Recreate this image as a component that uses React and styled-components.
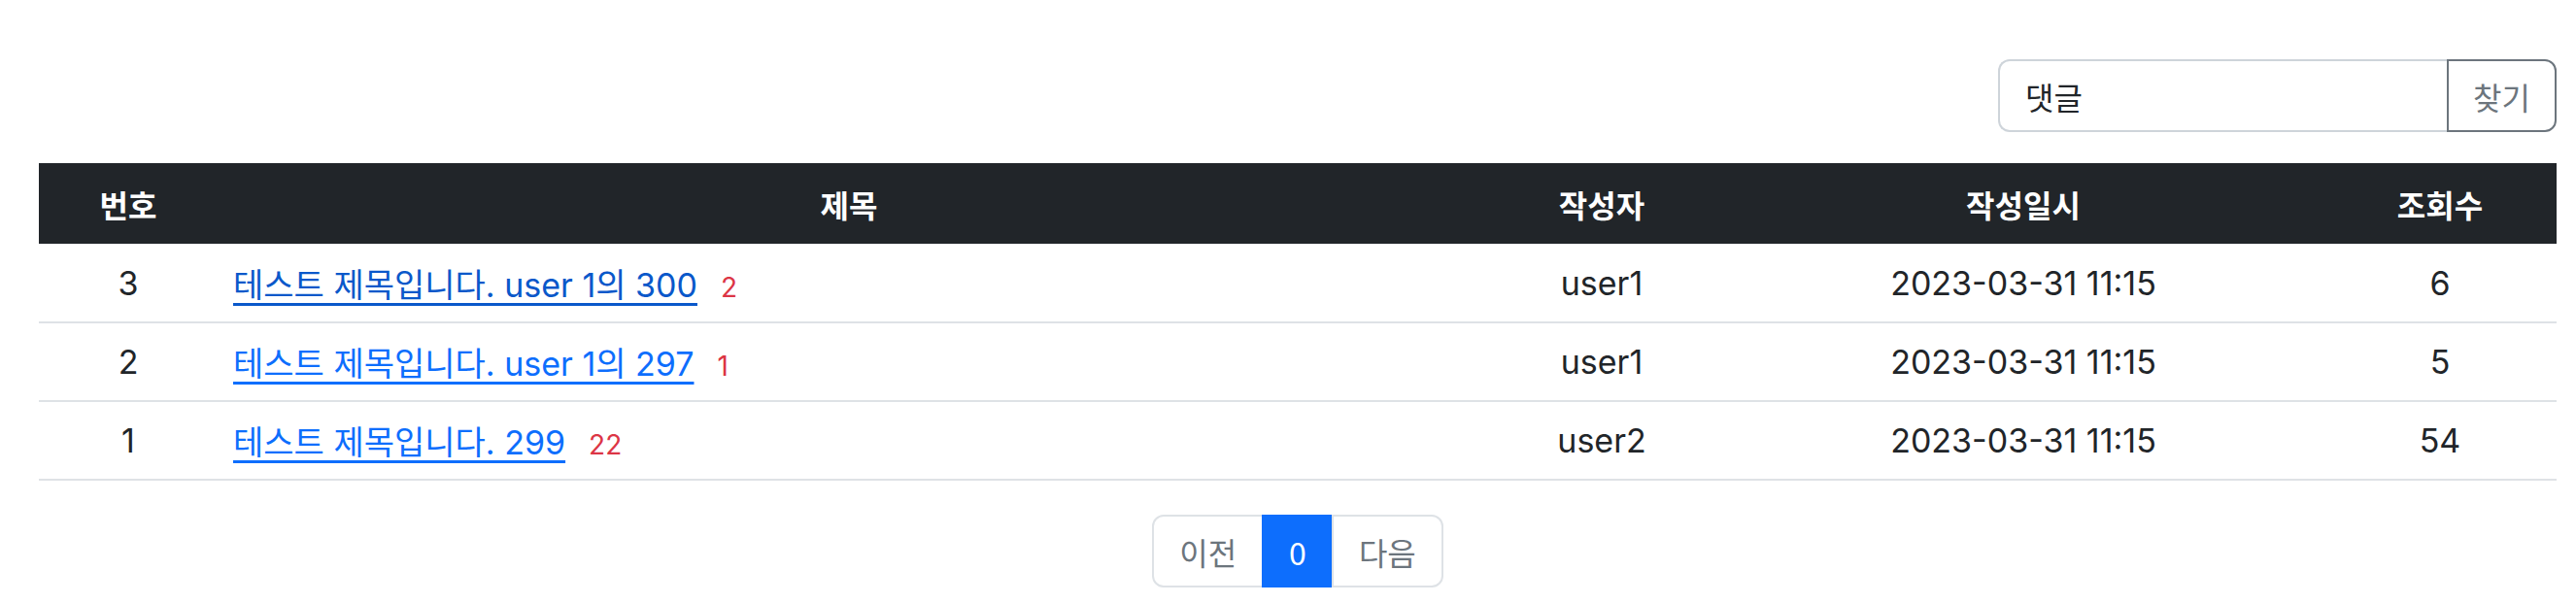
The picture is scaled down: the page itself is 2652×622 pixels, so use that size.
import React from 'react'
import styled, { createGlobalStyle } from 'styled-components'

const posts = [
    { id: 3, title: '테스트 제목입니다. user 1의 300', comments: 2, author: 'user1', date: '2023-03-31 11:15', views: 6, visited: true },
    { id: 2, title: '테스트 제목입니다. user 1의 297', comments: 1, author: 'user1', date: '2023-03-31 11:15', views: 5 },
    { id: 1, title: '테스트 제목입니다. 299', comments: 22, author: 'user2', date: '2023-03-31 11:15', views: 54 },
]

const App = () => {
    return (
        <>
            <GlobalStyle />
            <Page>
                <SearchBar>
                    <SearchInput type="text" defaultValue="댓글" />
                    <SearchButton>찾기</SearchButton>
                </SearchBar>
                <Table>
                    <colgroup>
                        <col style={{ width: 184 }} />
                        <col style={{ width: 1300 }} />
                        <col style={{ width: 250 }} />
                        <col style={{ width: 618 }} />
                        <col style={{ width: 240 }} />
                    </colgroup>
                    <thead>
                        <tr>
                            <Th>번호</Th>
                            <Th>제목</Th>
                            <Th>작성자</Th>
                            <Th>작성일시</Th>
                            <Th>조회수</Th>
                        </tr>
                    </thead>
                    <tbody>
                        {posts.map(post => (
                            <tr key={post.id}>
                                <Td>{post.id}</Td>
                                <Td $left>
                                    <TitleLink href="/" $visited={post.visited}>{post.title}</TitleLink>
                                    <CommentCount>{post.comments}</CommentCount>
                                </Td>
                                <Td>{post.author}</Td>
                                <Td>{post.date}</Td>
                                <Td>{post.views}</Td>
                            </tr>
                        ))}
                    </tbody>
                </Table>
                <Pagination>
                    <PageItem>이전</PageItem>
                    <PageItem $active>0</PageItem>
                    <PageItem>다음</PageItem>
                </Pagination>
            </Page>
        </>
    )
}

const GlobalStyle = createGlobalStyle`
    * {
        box-sizing: border-box;
    }

    body {
        margin: 0;
        background: #fff;
        color: #212529;
        font-family: "Noto Sans CJK KR", "Noto Sans", sans-serif;
    }
`

const Page = styled.div`
    padding: 61px 20px 0 40px;
`

const SearchBar = styled.div`
    display: flex;
    justify-content: flex-end;
    margin-bottom: 32px;
`

const SearchInput = styled.input`
    width: 462px;
    height: 75px;
    padding: 0 26px;
    font-family: inherit;
    font-size: 32px;
    color: #212529;
    border: 2px solid #ced4da;
    border-right: none;
    border-radius: 12px 0 0 12px;
    outline: none;
`

const SearchButton = styled.button`
    width: 113px;
    height: 75px;
    padding: 0;
    font-family: inherit;
    font-size: 32px;
    color: #6c757d;
    background: #fff;
    border: 2px solid #6c757d;
    border-radius: 0 12px 12px 0;
`

const Table = styled.table`
    width: 100%;
    border-collapse: collapse;
    table-layout: fixed;
    font-family: Inter, "Noto Sans CJK KR", sans-serif;
    font-size: 34px;
`

const Th = styled.th`
    height: 83px;
    padding: 0 16px;
    background: #212529;
    color: #fff;
    font-size: 32px;
    font-weight: 700;
    text-align: center;
`

const Td = styled.td`
    height: 81px;
    padding: 0 16px;
    border-bottom: 2px solid #dee2e6;
    text-align: ${props => props.$left ? 'left' : 'center'};
    white-space: nowrap;
`

const TitleLink = styled.a`
    color: ${props => props.$visited ? '#0a58ca' : '#0d6efd'};
    text-decoration: underline;
    text-underline-offset: 6px;
    text-decoration-thickness: 3px;
`

const CommentCount = styled.span`
    margin-left: 24px;
    color: #dc3545;
    font-size: 28px;
`

const Pagination = styled.div`
    display: flex;
    justify-content: center;
    margin-top: 35px;
`

const PageItem = styled.span`
    height: 75px;
    padding: 0 26px;
    display: flex;
    align-items: center;
    font-size: 32px;
    color: ${props => props.$active ? '#fff' : '#6c757d'};
    background: ${props => props.$active ? '#0d6efd' : '#fff'};
    border: 2px solid ${props => props.$active ? '#0d6efd' : '#dee2e6'};

    & + & {
        margin-left: -2px;
    }

    &:first-child {
        border-radius: 12px 0 0 12px;
    }

    &:last-child {
        border-radius: 0 12px 12px 0;
    }
`

export default App
